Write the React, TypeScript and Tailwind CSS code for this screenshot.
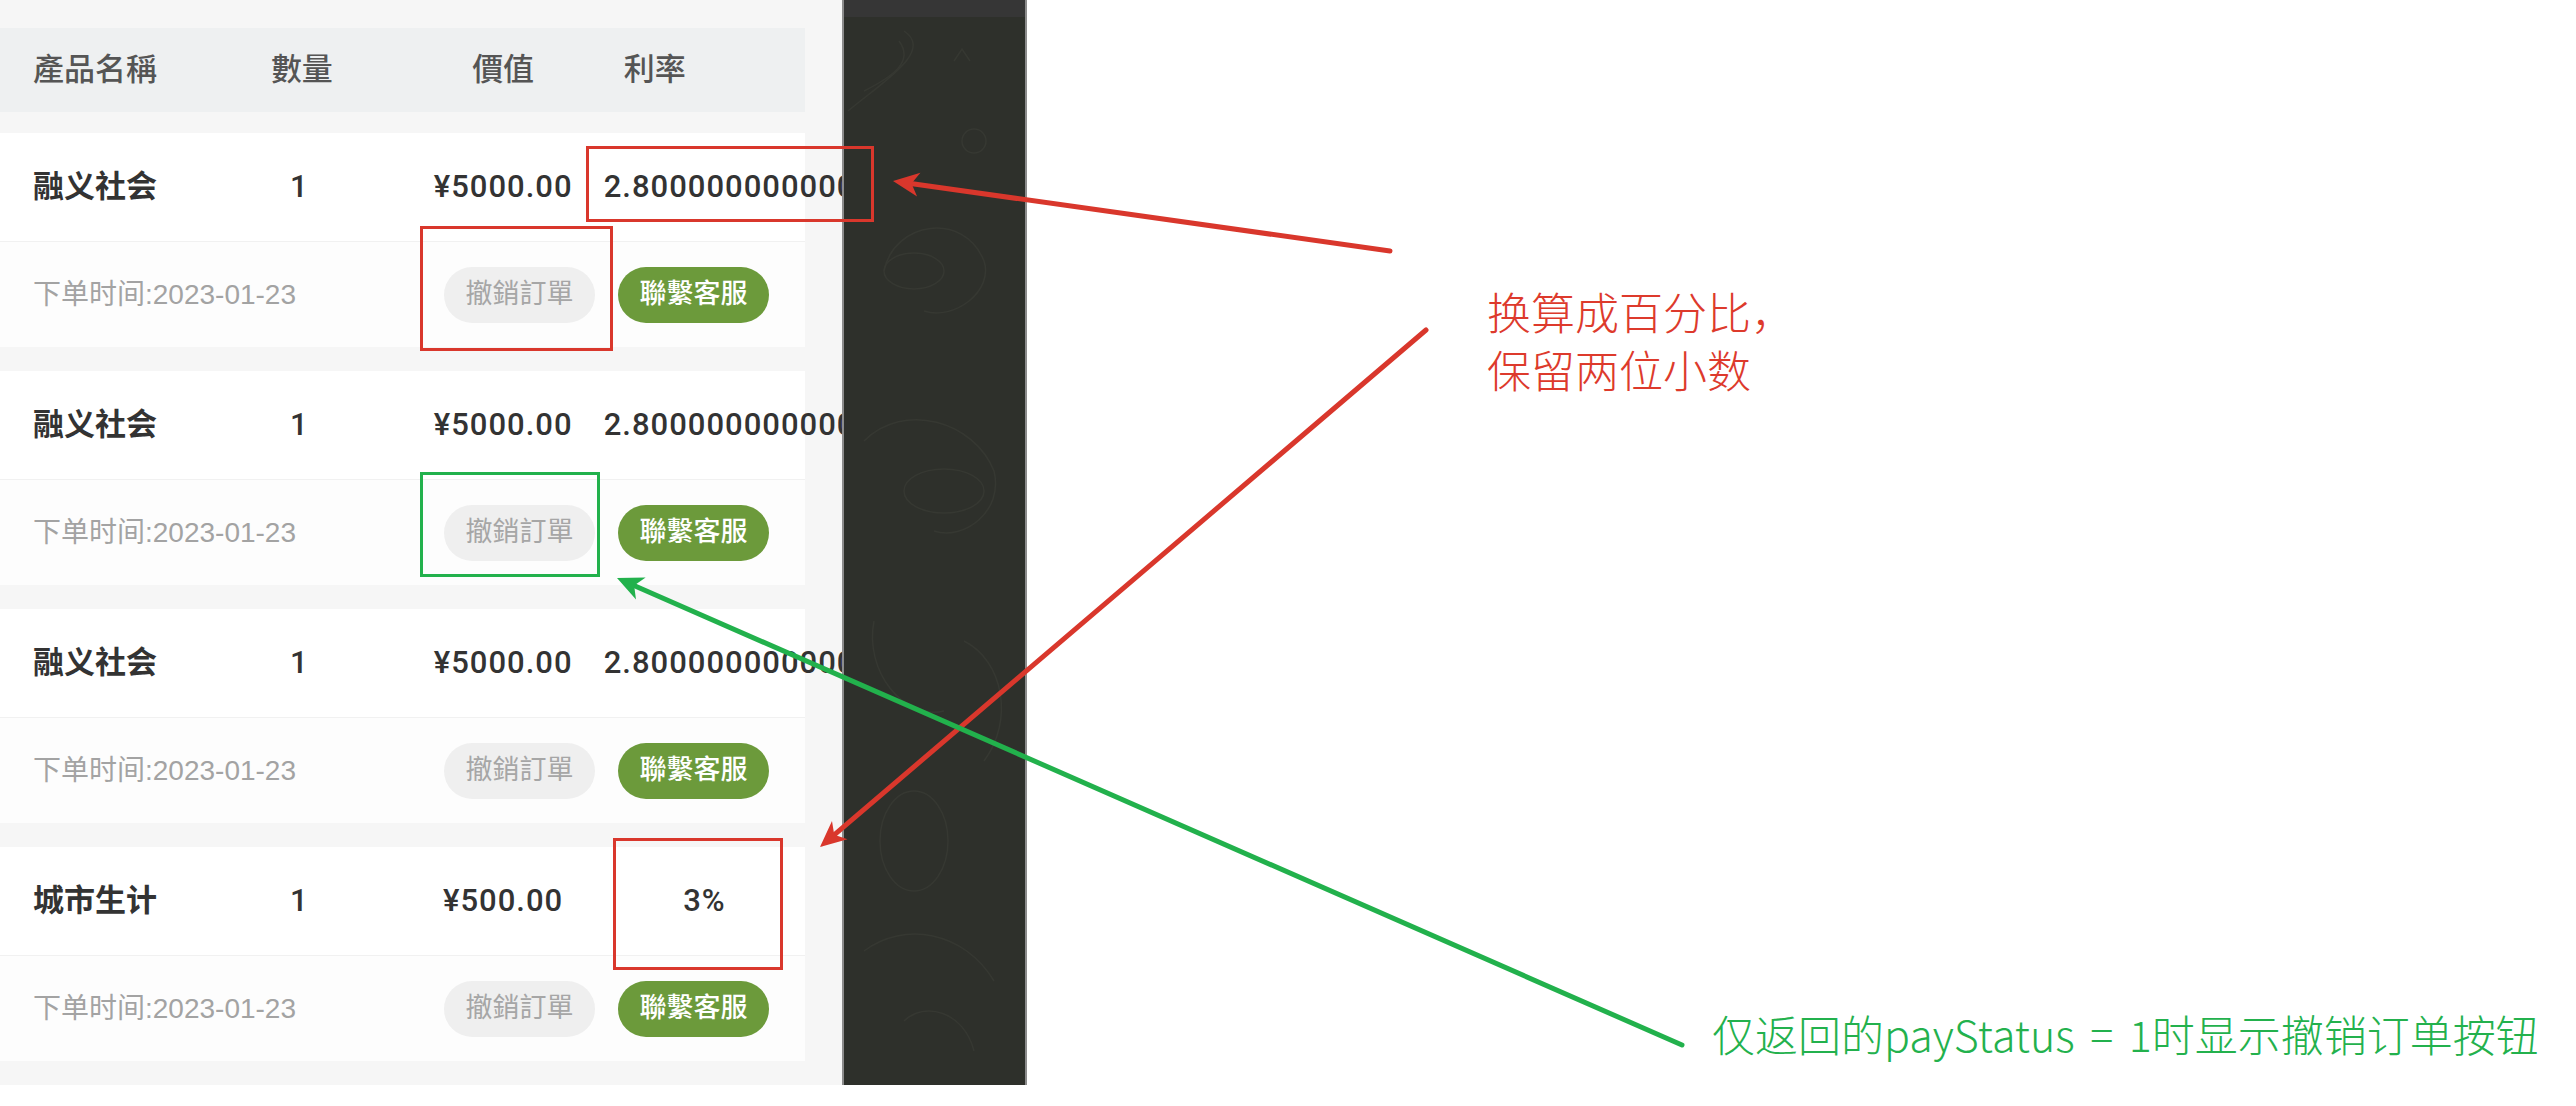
import type { ReactNode } from 'react'

interface Order {
  name: string
  qty: number
  value: string
  rate: string
}

const orders: Order[] = [
  { name: '融义社会', qty: 1, value: '¥5000.00', rate: '2.8000000000000003' },
  { name: '融义社会', qty: 1, value: '¥5000.00', rate: '2.8000000000000003' },
  { name: '融义社会', qty: 1, value: '¥5000.00', rate: '2.8000000000000003' },
  { name: '城市生计', qty: 1, value: '¥500.00', rate: '3%' },
]

// Arrow head polygon pointing at (x2, y2), coming from (x1, y1).
function head(x1: number, y1: number, x2: number, y2: number, len = 26, w = 12) {
  const d = Math.hypot(x2 - x1, y2 - y1)
  const ux = (x2 - x1) / d
  const uy = (y2 - y1) / d
  const bx = x2 - ux * len
  const by = y2 - uy * len
  const nx = x2 - ux * len * 0.72
  const ny = y2 - uy * len * 0.72
  return `${x2},${y2} ${bx - uy * w},${by + ux * w} ${nx},${ny} ${bx + uy * w},${by - ux * w}`
}

function Arrow({ from, to, color }: { from: [number, number]; to: [number, number]; color: string }) {
  const [x1, y1] = from
  const [x2, y2] = to
  const d = Math.hypot(x2 - x1, y2 - y1)
  // stop the shaft inside the head so the tip stays sharp
  const ex = x2 - ((x2 - x1) / d) * 16
  const ey = y2 - ((y2 - y1) / d) * 16
  return (
    <g>
      <line x1={x1} y1={y1} x2={ex} y2={ey} stroke={color} strokeWidth={5} strokeLinecap="round" />
      <polygon points={head(x1, y1, x2, y2)} fill={color} />
    </g>
  )
}

function Mark({ className }: { className: string }) {
  return <div className={`pointer-events-none absolute border-[3px] ${className}`} />
}

function OrderCard({ order }: { order: Order }) {
  return (
    <div className="bg-white">
      <div className="grid h-[109px] grid-cols-4 items-center border-b border-[#f1f1f1] font-['Roboto','Noto_Sans_CJK_SC',sans-serif] text-[31px] text-[#333]">
        <div className="pl-[33px] font-semibold">{order.name}</div>
        <div className="pr-[6px] text-center font-medium">{order.qty}</div>
        <div className="text-center font-medium tracking-[1px]">{order.value}</div>
        <div className="whitespace-nowrap text-center font-medium tracking-[1px]">{order.rate}</div>
      </div>
      <div className="flex h-[105px] items-center justify-between bg-[#fdfdfd] pl-[33px] pr-[36px]">
        <span className="text-[28px] text-[#a3a3a3]">下单时间:2023-01-23</span>
        <div className="flex gap-[23px]">
          <button className="h-[56px] w-[151px] rounded-full bg-[#efefef] text-[27px] text-[#a6a6a6]">撤銷訂單</button>
          <button className="h-[56px] w-[151px] rounded-full bg-[#6c9a3b] text-[27px] font-medium text-white">聯繫客服</button>
        </div>
      </div>
    </div>
  )
}

function Doodles(): ReactNode {
  // faint line-art texture of the chat wallpaper
  return (
    <svg className="mt-[4px]" width="181" height="1060" viewBox="0 0 181 1060" fill="none" stroke="#363832" strokeWidth="1.5">
      <path d="M4 90 C 40 60, 90 30, 60 10" />
      <path d="M20 70 C 50 55, 70 40, 55 20" />
      <ellipse cx="70" cy="250" rx="30" ry="18" />
      <path d="M40 250 C 50 200, 120 190, 140 240 C 150 270, 110 300, 80 290" />
      <circle cx="130" cy="120" r="12" />
      <path d="M110 40 l8 -12 l8 12" />
      <path d="M20 420 C 60 380, 130 400, 150 450 C 160 490, 120 520, 90 510" />
      <ellipse cx="100" cy="470" rx="40" ry="22" />
      <path d="M30 600 C 20 650, 60 700, 100 690" />
      <path d="M120 620 C 160 640, 170 700, 140 740" />
      <ellipse cx="70" cy="820" rx="34" ry="50" />
      <path d="M20 930 C 60 900, 120 910, 150 960" />
      <path d="M60 1000 C 80 980, 120 990, 130 1030" />
    </svg>
  )
}

export default function App() {
  return (
    <div className="relative h-[1106px] w-[2576px] overflow-hidden bg-white font-['Liberation_Sans','Noto_Sans_CJK_SC',sans-serif]">
      <div className="flex h-[1085px] w-[1027px]">
        {/* order list */}
        <div className="w-[842px] overflow-hidden bg-[#f6f6f6] pt-[28px]">
          <div className="w-[805px]">
            <div className="grid h-[84px] grid-cols-4 items-center bg-[#eef0f1] text-[31px] font-medium text-[#555]">
              <div className="pl-[33px]">產品名稱</div>
              <div className="text-center">數量</div>
              <div className="text-center">價值</div>
              <div className="pl-[20px]">利率</div>
            </div>
            <div className="mt-[21px] flex flex-col gap-[24px]">
              {orders.map((o, i) => (
                <OrderCard key={i} order={o} />
              ))}
            </div>
          </div>
        </div>

        {/* dark side panel */}
        <div className="flex w-[185px] flex-col border-x-2 border-[#8c8c8c] bg-[#2e302b]">
          <div className="h-[17px] bg-[#363636]" />
          <Doodles />
        </div>
      </div>

      {/* annotation boxes */}
      <Mark className="left-[586px] top-[146px] h-[76px] w-[288px] border-[#d9372c]" />
      <Mark className="left-[420px] top-[226px] h-[125px] w-[193px] border-[#d9372c]" />
      <Mark className="left-[420px] top-[472px] h-[105px] w-[180px] border-[#22b14c]" />
      <Mark className="left-[613px] top-[838px] h-[132px] w-[170px] border-[#d9372c]" />

      {/* annotation arrows */}
      <svg className="pointer-events-none absolute left-0 top-0" width="2576" height="1106">
        <Arrow from={[1390, 251]} to={[893, 181]} color="#d9372c" />
        <Arrow from={[1426, 330]} to={[820, 847]} color="#d9372c" />
        <Arrow from={[1682, 1045]} to={[617, 578]} color="#22b14c" />
      </svg>

      {/* annotation notes */}
      <div className="absolute left-[1487px] top-[282px] font-['Noto_Sans_CJK_SC',sans-serif] text-[44px] font-light leading-[58px] text-[#dd3a2c]">
        <p>换算成百分比，</p>
        <p>保留两位小数</p>
      </div>
      <p className="absolute left-[1712px] top-[1007px] whitespace-nowrap font-['Noto_Sans_CJK_SC',sans-serif] text-[43px] font-light leading-[52px] text-[#23b14d]">
        仅返回的payStatus<span className="px-[6px]"> = </span>1时显示撤销订单按钮
      </p>
    </div>
  )
}
